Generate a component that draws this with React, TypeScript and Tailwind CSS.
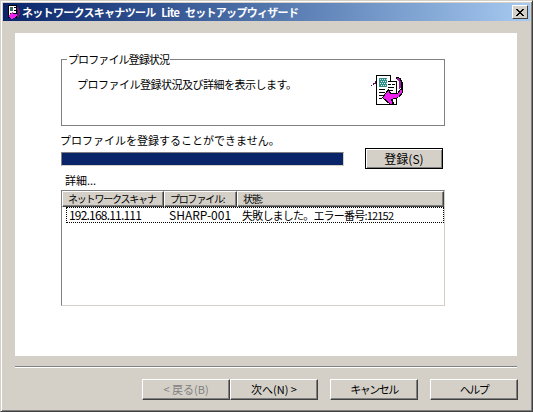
const font = { fontFamily: '"Noto Sans CJK JP", "Liberation Sans", sans-serif' };

function Btn({ label, disabled, cls }: { label: string; disabled?: boolean; cls?: string }) {
  return (
    <div
      className={`w-[88px] h-[21px] flex items-center justify-center text-[11px] leading-none whitespace-nowrap bg-[#d4d0c8] border border-t-white border-l-white border-r-[#404040] border-b-[#404040] shadow-[inset_-1px_-1px_0_#808080] ${cls ?? ""} ${disabled ? "text-[#808080]" : "text-black"}`}
    >
      {label}
    </div>
  );
}

function Head({ label, w, grow }: { label: string; w?: string; grow?: boolean }) {
  return (
    <div
      className={`h-[16px] pl-[5px] flex items-center text-[10px] tracking-[-1.2px] leading-none whitespace-nowrap overflow-hidden bg-[#d4d0c8] border border-t-white border-l-white border-r-[#404040] border-b-[#404040] shadow-[inset_-1px_-1px_0_#808080] ${w ?? ""} ${grow ? "flex-1" : ""}`}
    >
      {label}
    </div>
  );
}

function WizardIcon() {
  return (
    <svg width="34" height="32" viewBox="0 0 34 32" shapeRendering="crispEdges">
      <path d="M5.5 1.5H19.5L25.5 7.5V30.5H5.5Z" fill="#fff" stroke="#000" />
      <path d="M19.5 1.5V7.5H25.5" fill="#fff" stroke="#000" />
      <rect x="8" y="4" width="8" height="9" fill="#2f8f88" />
      <path d="M9 5h1v1H9zM11 5h1v1h-1zM13 5h1v1h-1zM15 5h1v1h-1zM10 7h1v1h-1zM12 7h1v1h-1zM14 7h1v1h-1zM9 9h1v1H9zM11 9h1v1h-1zM13 9h1v1h-1zM15 9h1v1h-1zM10 11h1v1h-1zM12 11h1v1h-1zM14 11h1v1h-1z" fill="#cfe8e4" />
      <path d="M17 7h3v1h-3zM17 10h3v1h-3zM21 10h3v1h-3zM17 13h6v1h-6zM8 15h6v1H8zM16 16h6v1h-6zM8 18h6v1H8zM8 21h5v1H8zM8 24h3v1H8z" fill="#000" />
      <path d="M0 11h2V9h2V7h1v3H3v1H1v1H0Z" fill="#5a1060" />
      <path d="M25 3h3v1h2v2h1v2h1v7h-1v3h-2v-3h1V8h-1V6h-2V5h-2Z" fill="#000" />
      <path d="M26 4h2v1h1v2h1v7h-1v1h-1V7h-1V6h-1Z" fill="#9a1aa0" />
      <path d="M11.5 23.5L17.5 15.5L19.5 19.5H26.5L29.5 15.5H31.5V18.5L27.5 23.5L20.5 25.5L22.5 29.5L19.5 30.5Z" fill="#f020f0" stroke="#000" />
    </svg>
  );
}

function TitleIcon() {
  return (
    <svg width="16" height="16" viewBox="0 0 16 16" shapeRendering="crispEdges" className="shrink-0">
      <rect x="3.5" y="1.5" width="8" height="12" fill="#fff" stroke="#000" />
      <rect x="5" y="3" width="3" height="4" fill="#3c6a70" />
      <path d="M9 3h2v1H9zM9 6h2v1H9zM5 9h6v1H5z" fill="#000" />
      <path d="M12 3h1v1h1v2h1v5h-1v2h-2v-2h1V6h-1Z" fill="#701a70" />
      <path d="M3 12L8 8V10H12V12L9 14H8V15H6Z" fill="#f020f0" />
    </svg>
  );
}

export default function App() {
  return (
    <div
      style={font}
      className="w-[533px] h-[412px] overflow-hidden flex flex-col bg-[#d4d0c8] text-black border border-t-[#d4d0c8] border-l-[#d4d0c8] border-r-[#404040] border-b-[#404040] shadow-[inset_1px_1px_0_#fff,inset_-1px_-1px_0_#808080] p-[2px]"
    >
      <div className="h-[18px] shrink-0 flex items-center pl-[2px] pr-[2px] bg-gradient-to-r from-[#0a246a] to-[#a6caf0]">
        <TitleIcon />
        <span className="ml-[1px] text-[11px] tracking-[-0.7px] [word-spacing:4px] font-bold text-white leading-none whitespace-nowrap flex-1">
          ネットワークスキャナツール Lite セットアップウィザード
        </span>
        <div className="w-[16px] h-[14px] flex items-center justify-center bg-[#d4d0c8] border border-t-white border-l-white border-r-[#404040] border-b-[#404040]">
          <svg width="8" height="7" viewBox="0 0 8 7" shapeRendering="crispEdges">
            <path d="M0 0h2v1h1v1h2V1h1V0h2v1H7v1H6v1H5v1h1v1h1v1h1v1H6V6H5V5H3v1H2v1H0V6h1V5h1V4h1V3H2V2H1V1H0Z" fill="#000" />
          </svg>
        </div>
      </div>

      <div className="flex-1 flex flex-col pl-[12px] pr-[13px] pt-[12px]">
        <div className="h-[323px] shrink-0 bg-white pl-[46px] pr-[72px] pt-[19px] text-[11px] leading-none">
          <fieldset className="h-[74px] border border-[#808080] pl-[5px] m-0 flex">
            <legend className="px-[1px] ml-0 leading-[14px] text-[11px] tracking-[-0.9px]">プロファイル登録状況</legend>
            <div className="flex-1 flex items-start pl-[10px] pt-[11px] pr-[39px] justify-between">
              <span className="leading-[14px] tracking-[-0.5px]">プロファイル登録状況及び詳細を表示します。</span>
              <div className="-mt-[3px]">
                <WizardIcon />
              </div>
            </div>
          </fieldset>

          <div className="mt-[7px] -ml-[1px] leading-[14px] whitespace-nowrap">プロファイルを登録することができません。</div>

          <div className="mt-[1px] flex items-center">
            <div className="w-[283px] h-[14px] bg-[#0a246a] border border-t-[#808080] border-l-[#808080] border-r-[#d4d0c8] border-b-[#d4d0c8]" />
            <div className="ml-[21px] w-[78px] h-[21px] flex items-center justify-center text-[12px] bg-[#d4d0c8] border border-black shadow-[inset_1px_1px_0_#fff,inset_-1px_-1px_0_#808080]">
              登録(S)
            </div>
          </div>

          <div className="mt-[4px] pl-[4px] leading-[14px]">詳細...</div>

          <div className="mt-[3px] h-[116px] border border-t-[#808080] border-l-[#808080] border-r-[#d4d0c8] border-b-[#d4d0c8] flex flex-col">
            <div className="flex shrink-0">
              <Head label="ネットワークスキャナ" w="w-[102px]" />
              <Head label="プロファイル:" w="w-[73px]" />
              <Head label="状態:" grow />
            </div>
            <div className="h-[16px] flex items-center border border-dotted border-black leading-none whitespace-nowrap ml-[4px] pl-[2px] text-[12px]">
              <span className="w-[100px] tracking-[-0.8px]">192.168.11.111</span>
              <span className="w-[73px]">SHARP-001</span>
              <span className="text-[11px] tracking-[-0.8px]">失敗しました。エラー番号:12152</span>
            </div>
          </div>
        </div>

        <div className="mt-[10px] h-[2px] shrink-0 border-t border-t-[#808080] border-b border-b-white" />

        <div className="mt-[11px] -mr-[1px] flex pl-[127px]">
          <Btn label="< 戻る(B)" disabled />
          <Btn label="次へ(N) >" />
          <Btn label="キャンセル" cls="ml-[12px] tracking-[-1.5px]" />
          <Btn label="ヘルプ" cls="ml-[12px] tracking-[-1.5px]" />
        </div>
      </div>
    </div>
  );
}
